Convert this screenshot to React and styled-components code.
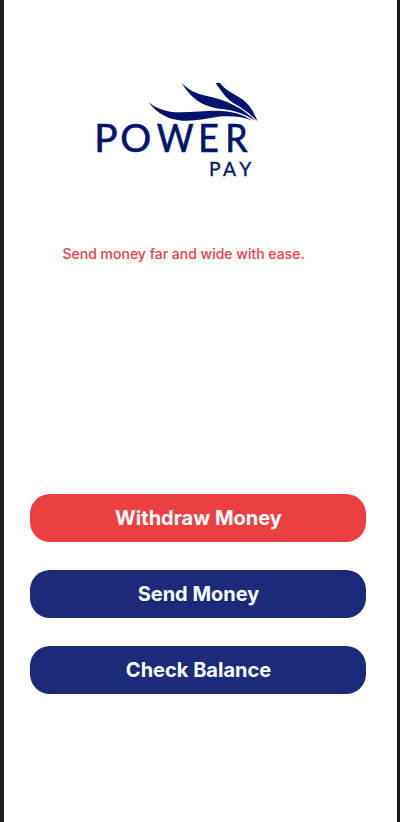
import React from "react";
import styled, { createGlobalStyle } from "styled-components";

const GlobalStyle = createGlobalStyle`
  * { box-sizing: border-box; }
  body { margin: 0; background: #fff; font-family: Inter, sans-serif; }
`;

const Screen = styled.main`
  display: flex;
  flex-direction: column;
  width: 400px;
  height: 822px;
  padding: 75px 31px 0 26px;
  background: #fff;
  border-left: 4px solid #1f1e1c;
  border-right: 3px solid #191b1b;
  overflow: hidden;
`;

const Logo = styled.svg`
  display: block;
  flex: none;
  width: 180px;
  height: 110px;
  margin-left: 60px;
  fill: #03136b;
  font-family: Lato, sans-serif;
`;

const Lettering = styled.text`
  stroke: #03136b;
  stroke-width: ${({ $weight }) => $weight};
`;

const Tagline = styled.p`
  margin: 59px 0 0 32.5px;
  height: 20px;
  color: #eb4042;
  font-size: 14px;
  font-weight: 500;
  line-height: 20px;
  white-space: nowrap;
`;

const Actions = styled.div`
  display: grid;
  gap: 28px;
  width: 336px;
  margin-top: 230px;
`;

const ActionButton = styled.button`
  height: 48px;
  padding: 0 0 0 1px;
  border: 0;
  border-radius: 20px;
  background: ${({ $primary }) => ($primary ? "#ec4040" : "#1b2a79")};
  color: #fff;
  font: 700 20px/24px Inter, sans-serif;
`;

function PowerPayLogo() {
  return (
    <Logo viewBox="0 0 540 330" aria-label="Power Pay">
      <path d="M176 82Q204 105 240 110C285 115 335 107 378 107Q440 105 488 137Q450 121 395 124C350 131 315 139 278 137Q215 134 176 82Z" />
      <path d="M275 24C298 46 314 55 348 62C408 75 454 95 496 137Q452 109 404 103C344 97 309 79 275 24Z" />
      <path d="M377 24H390C403 42 428 56 445 65Q483 84 502 139Q481 115 449 95C412 76 400 58 377 24Z" />
      <Lettering $weight={2} x="13 91" y="231" fontSize="116">PO</Lettering>
      <g transform="translate(200 231) scale(0.92 1)">
        <Lettering $weight={2} x="0 136 224" y="0" fontSize="116">WER</Lettering>
      </g>
      <Lettering $weight={1} x="357 399 448" y="303" fontSize="58">PAY</Lettering>
    </Logo>
  );
}

export default function App() {
  return (
    <>
      <GlobalStyle />
      <Screen>
        <PowerPayLogo />
        <Tagline>Send money far and wide with ease.</Tagline>
        <Actions>
          <ActionButton $primary>Withdraw Money</ActionButton>
          <ActionButton>Send Money</ActionButton>
          <ActionButton>Check Balance</ActionButton>
        </Actions>
      </Screen>
    </>
  );
}
